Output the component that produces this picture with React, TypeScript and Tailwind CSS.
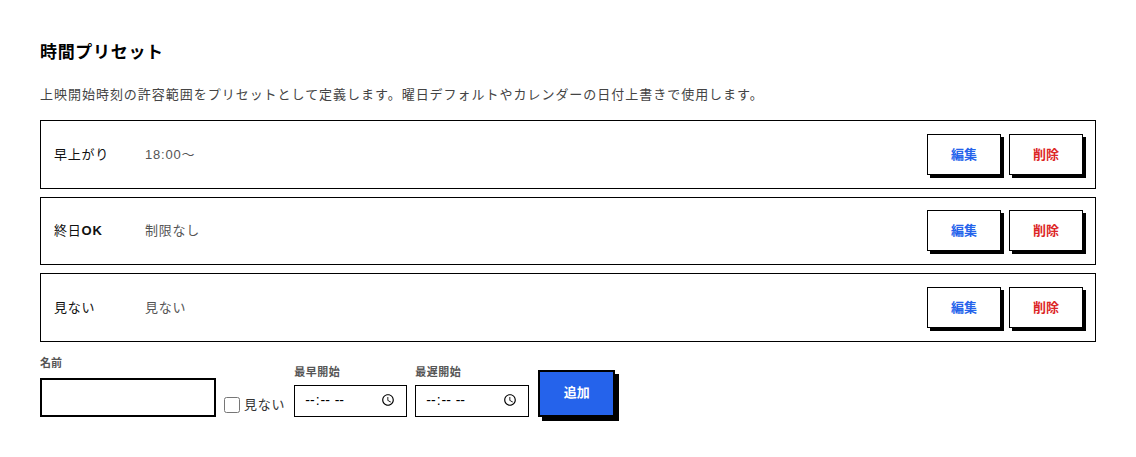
import React from 'react';

type Preset = { name: React.ReactNode; key: string; range: string };

const presets: Preset[] = [
  { key: 'early', name: '早上がり', range: '18:00〜' },
  { key: 'allday', name: <>終日<span className="font-bold">OK</span></>, range: '制限なし' },
  { key: 'skip', name: '見ない', range: '見ない' },
];

const font = { fontFamily: '"Liberation Sans", "Noto Sans CJK JP", sans-serif' };

const PresetRow = ({ preset }: { preset: Preset }) => (
  <div className="flex items-center h-[68.5px] border border-black pl-[13px] pr-[12px]">
    <span className="w-[91px] text-[13px] tracking-[0.06em] text-[#111]">{preset.name}</span>
    <span className="flex-1 text-[13px] tracking-[0.06em] text-[#555]">{preset.range}</span>
    <div className="flex gap-2">
      <button className="w-[74px] h-[41px] bg-white border border-black shadow-[3px_3px_0_#000] text-[13px] font-bold text-[#2563eb]">
        編集
      </button>
      <button className="w-[74px] h-[41px] bg-white border border-black shadow-[3px_3px_0_#000] text-[13px] font-bold text-[#dc2626]">
        削除
      </button>
    </div>
  </div>
);

export default function App() {
  return (
    <div className="min-h-screen bg-white px-10 pt-[40px] text-black" style={font}>
      <h2 className="text-[17px] font-bold leading-[26px] tracking-[0.04em]">時間プリセット</h2>
      <p className="mt-[19px] text-[13px] leading-[20px] tracking-[0.075em] text-[#444]">
        上映開始時刻の許容範囲をプリセットとして定義します。曜日デフォルトやカレンダーの日付上書きで使用します。
      </p>

      <div className="mt-[15px] flex flex-col gap-2">
        {presets.map((p) => (
          <PresetRow key={p.key} preset={p} />
        ))}
      </div>

      <div className="mt-[13px] flex items-end gap-2">
        <div className="flex flex-col">
          <label className="text-[11px] font-bold leading-[16px] text-[#555] mb-[7px]">名前</label>
          <input type="text" className="w-[176px] h-[39px] border-2 border-black px-2 text-[13px] outline-none" />
        </div>

        <label className="flex items-center gap-1 mb-[2px] text-[13px] tracking-[0.06em] text-[#333]">
          <input type="checkbox" className="w-4 h-4" />
          見ない
        </label>

        <div className="flex flex-col ml-[1px]">
          <label className="text-[11px] font-bold leading-[16px] tracking-[0.04em] text-[#555] mb-[5px]">最早開始</label>
          <input type="time" className="w-[113px] h-[32px] border border-black pl-[9px] pr-[8px] text-[14px]" />
        </div>

        <div className="flex flex-col">
          <label className="text-[11px] font-bold leading-[16px] tracking-[0.04em] text-[#555] mb-[5px]">最遅開始</label>
          <input type="time" className="w-[114px] h-[32px] border border-black pl-[9px] pr-[8px] text-[14px]" />
        </div>

        <button className="ml-[1px] w-[77px] h-[47px] bg-[#2563eb] border-2 border-black shadow-[4px_4px_0_#000] text-[13px] font-bold text-white">
          追加
        </button>
      </div>
    </div>
  );
}
